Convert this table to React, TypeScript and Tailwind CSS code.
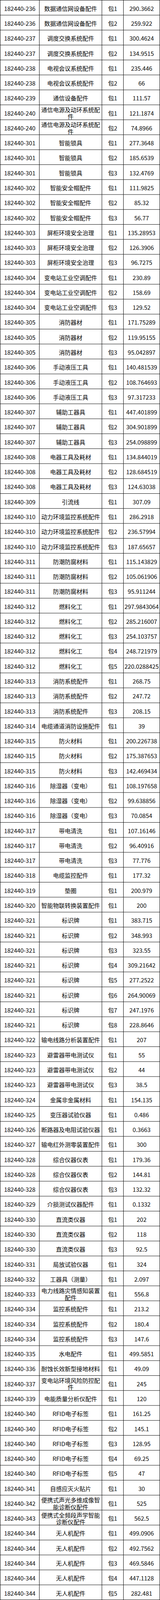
import { useLayoutEffect, useState } from "react";

const rows: [string, string, string, string][] = [
  ["182440-236", "数据通信网设备配件", "1", "290.3662"],
  ["182440-236", "数据通信网设备配件", "2", "259.922"],
  ["182440-237", "调度交换系统配件", "1", "300.4624"],
  ["182440-237", "调度交换系统配件", "2", "134.9515"],
  ["182440-238", "电视会议系统配件", "1", "235.446"],
  ["182440-238", "电视会议系统配件", "2", "66"],
  ["182440-239", "通信设备配件", "1", "111.57"],
  ["182440-240", "通信电源及动环系统配件", "1", "121.1874"],
  ["182440-240", "通信电源及动环系统配件", "2", "74.8966"],
  ["182440-301", "智能锁具", "1", "277.3648"],
  ["182440-301", "智能锁具", "2", "185.6539"],
  ["182440-301", "智能锁具", "3", "132.4769"],
  ["182440-302", "智能安全帽配件", "1", "111.9825"],
  ["182440-302", "智能安全帽配件", "2", "85.32"],
  ["182440-302", "智能安全帽配件", "3", "56.77"],
  ["182440-303", "屏柜环境安全治理", "1", "135.28953"],
  ["182440-303", "屏柜环境安全治理", "2", "126.3906"],
  ["182440-303", "屏柜环境安全治理", "3", "96.7275"],
  ["182440-304", "变电站工业空调配件", "1", "230.89"],
  ["182440-304", "变电站工业空调配件", "2", "158.69"],
  ["182440-304", "变电站工业空调配件", "3", "129.52"],
  ["182440-305", "消防器材", "1", "171.75289"],
  ["182440-305", "消防器材", "2", "119.95155"],
  ["182440-305", "消防器材", "3", "95.042897"],
  ["182440-306", "手动液压工具", "1", "140.481539"],
  ["182440-306", "手动液压工具", "2", "108.764693"],
  ["182440-306", "手动液压工具", "3", "97.317233"],
  ["182440-307", "辅助工器具", "1", "447.401899"],
  ["182440-307", "辅助工器具", "2", "304.901899"],
  ["182440-307", "辅助工器具", "3", "254.098899"],
  ["182440-308", "电器工具及耗材", "1", "134.844019"],
  ["182440-308", "电器工具及耗材", "2", "128.684519"],
  ["182440-308", "电器工具及耗材", "3", "124.63038"],
  ["182440-309", "引流线", "1", "307.09"],
  ["182440-310", "动力环境监控系统配件", "1", "286.2918"],
  ["182440-310", "动力环境监控系统配件", "2", "236.57994"],
  ["182440-310", "动力环境监控系统配件", "3", "187.65657"],
  ["182440-311", "防潮防腐材料", "1", "115.143829"],
  ["182440-311", "防潮防腐材料", "2", "105.061906"],
  ["182440-311", "防潮防腐材料", "3", "95.911244"],
  ["182440-312", "燃料化工", "1", "297.9843064"],
  ["182440-312", "燃料化工", "2", "285.216007"],
  ["182440-312", "燃料化工", "3", "254.103757"],
  ["182440-312", "燃料化工", "4", "248.721979"],
  ["182440-312", "燃料化工", "5", "220.0288425"],
  ["182440-313", "消防系统配件", "1", "268.75"],
  ["182440-313", "消防系统配件", "2", "247.72"],
  ["182440-313", "消防系统配件", "3", "208.15"],
  ["182440-314", "电缆通道消防设施配件", "1", "39"],
  ["182440-315", "防火材料", "1", "200.226738"],
  ["182440-315", "防火材料", "2", "175.387653"],
  ["182440-315", "防火材料", "3", "142.469434"],
  ["182440-316", "除湿器（变电）", "1", "108.197658"],
  ["182440-316", "除湿器（变电）", "2", "99.638856"],
  ["182440-316", "除湿器（变电）", "3", "70.0854"],
  ["182440-317", "带电清洗", "1", "107.16146"],
  ["182440-317", "带电清洗", "2", "96.40916"],
  ["182440-317", "带电清洗", "3", "77.776"],
  ["182440-318", "电缆监控配件", "1", "177.32"],
  ["182440-319", "垫圈", "1", "200.979"],
  ["182440-320", "智能物联转换装置配件", "1", "200"],
  ["182440-321", "标识牌", "1", "383.715"],
  ["182440-321", "标识牌", "2", "348.993"],
  ["182440-321", "标识牌", "3", "323.55"],
  ["182440-321", "标识牌", "4", "309.21642"],
  ["182440-321", "标识牌", "5", "277.2522"],
  ["182440-321", "标识牌", "6", "264.90069"],
  ["182440-321", "标识牌", "7", "247.1976"],
  ["182440-321", "标识牌", "8", "228.8646"],
  ["182440-322", "输电线路分析装置配件", "1", "207"],
  ["182440-323", "避雷器带电测试仪", "1", "55"],
  ["182440-323", "避雷器带电测试仪", "2", "44"],
  ["182440-323", "避雷器带电测试仪", "3", "38.5"],
  ["182440-324", "金属非金属材料", "1", "154.135"],
  ["182440-325", "变压器试验仪器", "1", "0.486"],
  ["182440-326", "断路器及电阻试验仪器", "1", "0.3663"],
  ["182440-327", "输电红外测零装置配件", "1", "300"],
  ["182440-328", "综合仪器仪表", "1", "179.36"],
  ["182440-328", "综合仪器仪表", "2", "144.81"],
  ["182440-328", "综合仪器仪表", "3", "132.32"],
  ["182440-329", "介损测试仪器配件", "1", "0.1332"],
  ["182440-330", "直流类仪器", "1", "202"],
  ["182440-330", "直流类仪器", "2", "118"],
  ["182440-330", "直流类仪器", "3", "92.5"],
  ["182440-331", "局放试验仪器", "1", "324"],
  ["182440-332", "工器具（测量）", "1", "2.097"],
  ["182440-333", "电力线路灾情感知装置配件", "1", "556.8"],
  ["182440-334", "监控系统配件", "1", "213.2"],
  ["182440-334", "监控系统配件", "2", "180.4"],
  ["182440-334", "监控系统配件", "3", "147.6"],
  ["182440-335", "水电配件", "1", "499.5851"],
  ["182440-336", "耐蚀长效新型接地材料", "1", "49.09"],
  ["182440-337", "变电站环境风险防控配件", "1", "245"],
  ["182440-339", "电能质量分析仪配件", "1", "120"],
  ["182440-340", "RFID电子标签", "1", "161.25"],
  ["182440-340", "RFID电子标签", "2", "145.1"],
  ["182440-340", "RFID电子标签", "3", "128.95"],
  ["182440-340", "RFID电子标签", "4", "69.25"],
  ["182440-340", "RFID电子标签", "5", "47"],
  ["182440-341", "自感应灭火贴片", "1", "30"],
  ["182440-342", "便携式声光多维成像智能诊断仪配件", "1", "525"],
  ["182440-343", "便携式全频段声学智能诊断仪配件", "1", "562.5"],
  ["182440-344", "无人机配件", "1", "499.0906"],
  ["182440-344", "无人机配件", "2", "492.7562"],
  ["182440-344", "无人机配件", "3", "469.5846"],
  ["182440-344", "无人机配件", "4", "447.1128"],
  ["182440-344", "无人机配件", "5", "282.481"],
];

const TABLE_HEIGHT = 4281;

// each cell is 40px tall including its 1px bottom rule
const cell =
  "h-[40px] flex items-center justify-center text-center border-r border-b border-black pt-[5px]";

const App = () => {
  // the window may be shorter than the table; squeeze it to fit if so
  const [fit, setFit] = useState(1);
  useLayoutEffect(() => {
    setFit(Math.min(1, window.innerHeight / TABLE_HEIGHT));
  }, []);

  return (
    <div className="w-[409px] bg-white text-black font-['Noto_Sans_CJK_SC',sans-serif] text-[15px] leading-[18px]">
      <div
        className="grid grid-cols-[100px_160px_55px_93px] auto-rows-[40px] border-l border-t border-black origin-top"
        style={{ transform: `scaleY(${fit})` }}
      >
        {rows.map(([code, name, pkg, value], i) => (
          <div key={i} className="contents">
            <div className={cell}>{code}</div>
            <div className={cell}>{name}</div>
            <div className={cell}>包{pkg}</div>
            <div className={cell}>{value}</div>
          </div>
        ))}
      </div>
    </div>
  );
};

export default App;
